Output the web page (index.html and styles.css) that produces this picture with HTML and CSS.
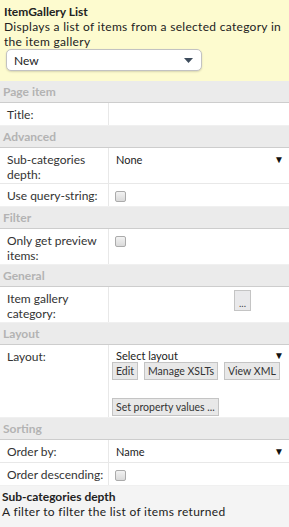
FILE: index.html
```html
<!DOCTYPE html>
<html lang="en">

<head>
    <meta charset="UTF-8">
    <meta name="viewport" content="width=device-width, initial-scale=1.0">
    <title>ItemGallery List</title>
    <link rel="stylesheet" href="styles.css">
</head>

<body>

    <div class="panel">
        <div class="intro">
            <div class="intro-title">ItemGallery List</div>
            <div class="intro-text">Displays a list of items from a selected category in the item gallery</div>
            <div class="preset">
                <select class="preset-select">
                    <option>New</option>
                </select>
                <svg class="preset-arrow" width="9" height="5" viewBox="0 0 9 5"><path d="M0 0H9L4.5 5Z" fill="#3d4c5c"/></svg>
            </div>
        </div>

        <div class="group">Page item</div>
        <div class="row">
            <div class="label">Title:</div>
            <div class="value"></div>
        </div>

        <div class="group">Advanced</div>
        <div class="row">
            <div class="label">Sub-categories depth:</div>
            <div class="value">
                <div class="pick">
                    <select class="pick-select">
                        <option>None</option>
                    </select>
                    <span class="pick-arrow">&#9660;</span>
                </div>
            </div>
        </div>
        <div class="row">
            <div class="label">Use query-string:</div>
            <div class="value"><input type="checkbox" class="check"></div>
        </div>

        <div class="group">Filter</div>
        <div class="row">
            <div class="label">Only get preview items:</div>
            <div class="value"><input type="checkbox" class="check"></div>
        </div>

        <div class="group">General</div>
        <div class="row">
            <div class="label">Item gallery category:</div>
            <div class="value"><button class="browse">...</button></div>
        </div>

        <div class="group">Layout</div>
        <div class="row">
            <div class="label">Layout:</div>
            <div class="value">
                <div class="pick pick-short">
                    <select class="pick-select">
                        <option>Select layout</option>
                    </select>
                    <span class="pick-arrow">&#9660;</span>
                </div>
                <div class="actions">
                    <button class="btn">Edit</button>
                    <button class="btn">Manage XSLTs</button>
                    <button class="btn">View XML</button>
                </div>
                <div class="actions actions-last">
                    <button class="btn">Set property values ...</button>
                </div>
            </div>
        </div>

        <div class="group">Sorting</div>
        <div class="row">
            <div class="label">Order by:</div>
            <div class="value">
                <div class="pick">
                    <select class="pick-select">
                        <option>Name</option>
                    </select>
                    <span class="pick-arrow">&#9660;</span>
                </div>
            </div>
        </div>
        <div class="row">
            <div class="label">Order descending:</div>
            <div class="value"><input type="checkbox" class="check"></div>
        </div>

        <div class="help">
            <div class="help-title">Sub-categories depth</div>
            <div class="help-text">A filter to filter the list of items returned</div>
        </div>
    </div>

</body>

</html>
```

FILE: styles.css
```css
* {
    margin: 0;
    padding: 0;
    box-sizing: border-box;
}

body {
    font-family: 'Lato', 'Open Sans', sans-serif;
    font-size: 12px;
    line-height: 15px;
    color: #333;
    background-color: #f4f4f4;
}

.panel {
    display: flex;
    flex-direction: column;
    min-height: 100vh;
}

/* Yellow header */
.intro {
    background-color: #fdfbcf;
    padding: 4px 4px 10px;
    color: #222;
}

.intro-title {
    font-weight: bold;
}

.intro-text {
    letter-spacing: 0.3px;
}

.preset {
    display: flex;
    align-items: center;
    width: 196px;
    height: 22px;
    margin: 0 0 0 2px;
    background-color: #fff;
    border: 1px solid #c2c2c2;
    border-radius: 5px;
    box-shadow: 0 1px 2px rgba(0, 0, 0, 0.15);
    padding-right: 8px;
}

.preset-select {
    flex: 1;
    appearance: none;
    -webkit-appearance: none;
    border: none;
    background: transparent;
    font-family: 'Lato', sans-serif;
    font-size: 12px;
    color: #222;
    padding-left: 7px;
    outline: none;
}

/* Group headings */
.group {
    height: 22px;
    line-height: 21px;
    padding-left: 3px;
    background-color: #ebebeb;
    border-bottom: 1px solid #cdcdcd;
    color: #b3b3b3;
    font-weight: bold;
}

/* Property rows */
.row {
    display: flex;
    background-color: #fff;
    border-bottom: 1px solid #e8e8e8;
    min-height: 23px;
}

.row:has(+ .group),
.row:has(+ .help) {
    border-bottom-color: #f0f0f0;
}

.label {
    width: 109px;
    flex-shrink: 0;
    padding: 4px 4px 1px 7px;
    border-right: 1px solid #e8e8e8;
}

.value {
    flex: 1;
    min-width: 0;
    padding: 4px 5px 1px 3px;
}

.pick {
    display: flex;
    align-items: center;
    height: 15px;
}

.pick-short {
    height: 13px;
}

.pick-select {
    flex: 1;
    min-width: 0;
    appearance: none;
    -webkit-appearance: none;
    border: none;
    background: transparent;
    font-family: 'Lato', sans-serif;
    font-size: 11px;
    color: #222;
    padding-left: 4px;
    outline: none;
}

.pick-arrow {
    font-size: 10px;
    color: #111;
}

.check {
    appearance: none;
    -webkit-appearance: none;
    display: block;
    width: 11px;
    height: 11px;
    margin: 3px 0 2px 3px;
    border: 1px solid #ababab;
    border-radius: 2px;
    background: linear-gradient(#f2f2f2, #dadada);
}

.browse {
    display: block;
    width: 17px;
    height: 21px;
    margin: -1px 0 0 122px;
    background-color: #e9e9eb;
    border: 1px solid #c4c4c4;
    font-family: 'Lato', sans-serif;
    font-size: 10px;
    color: #444;
    padding-top: 4px;
}

.actions {
    display: flex;
    gap: 6px;
}

.actions-last {
    margin-top: 18px;
}

.btn {
    flex-shrink: 0;
    white-space: nowrap;
    height: 18px;
    padding: 0 3px;
    background-color: #e8e8e8;
    border: 1px solid #c4c4c4;
    font-family: 'Lato', sans-serif;
    font-size: 10.5px;
    color: #333;
}

/* Help footer */
.help {
    flex: 1;
    padding: 3px 2px;
    color: #222;
}

.help-title {
    font-weight: bold;
}

.help-text {
    letter-spacing: 0.3px;
}
```
